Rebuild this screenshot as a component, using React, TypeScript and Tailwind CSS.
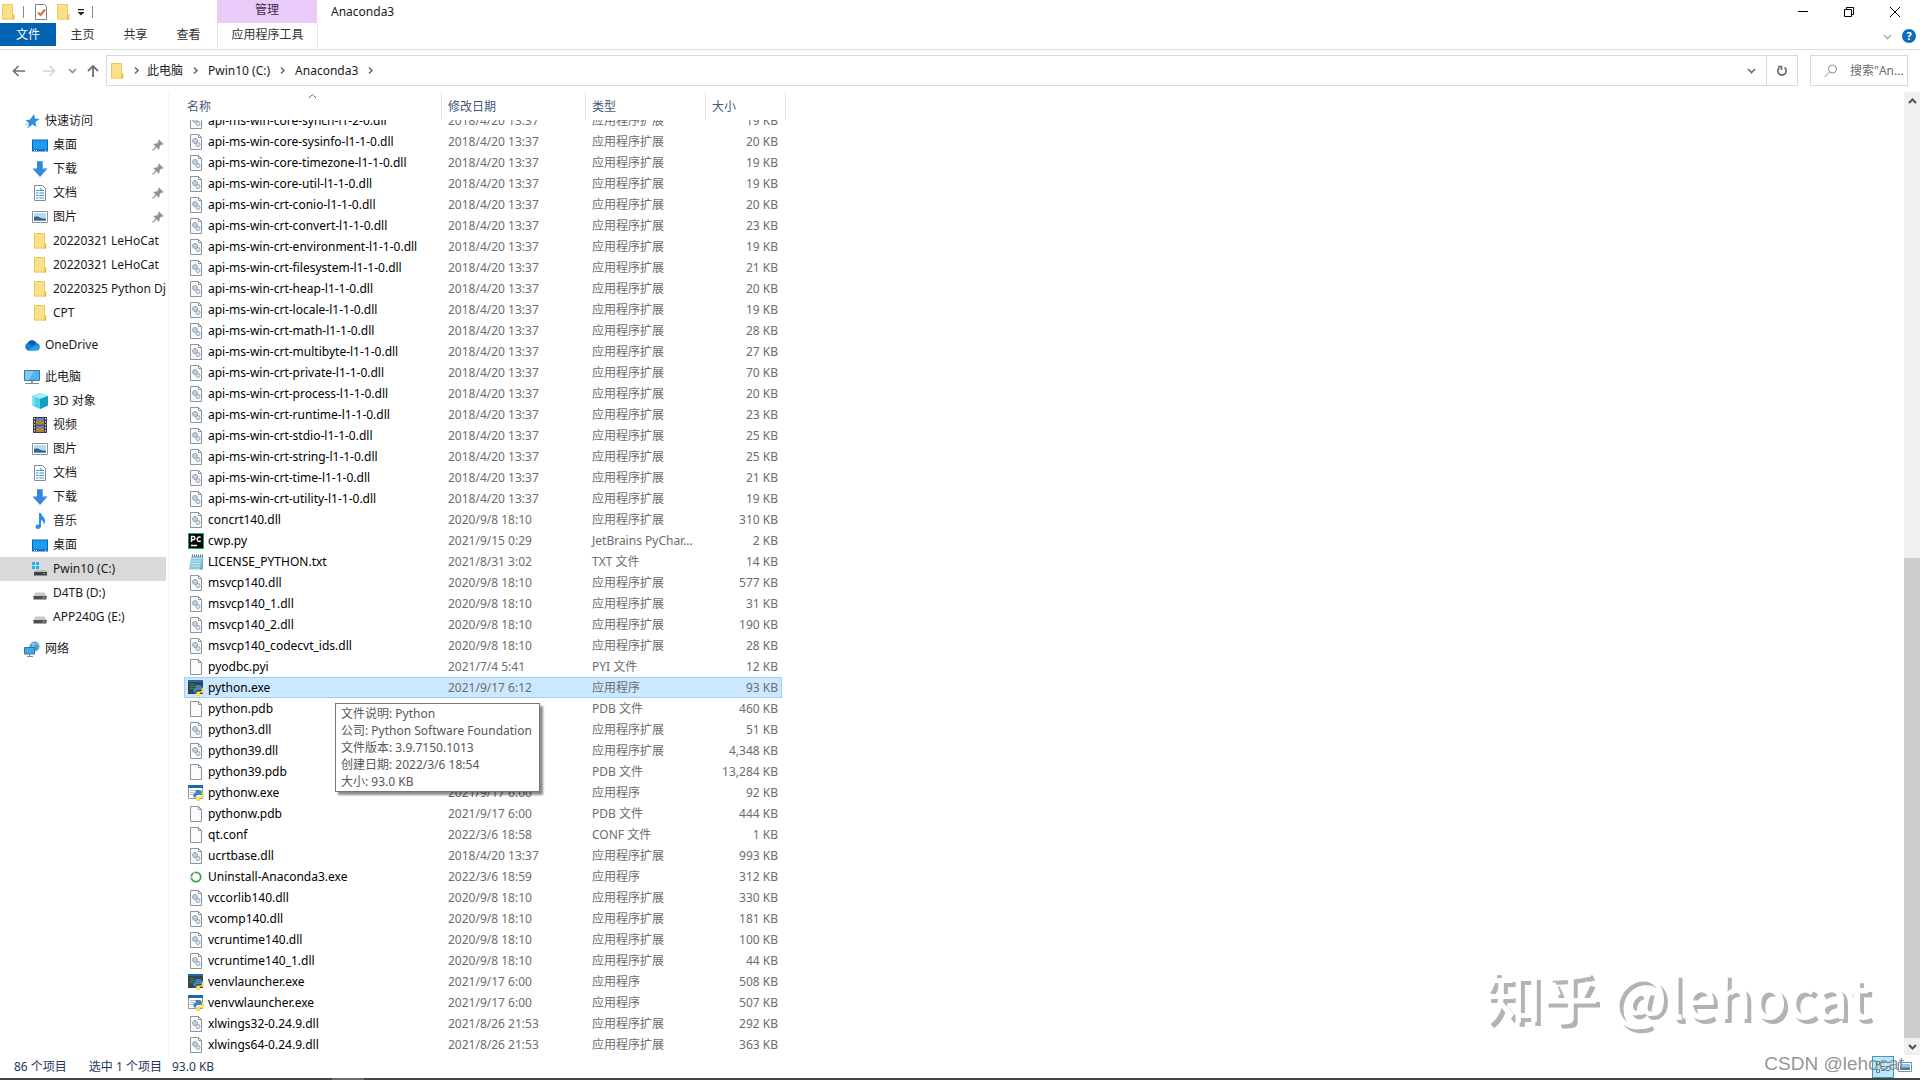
import React from "react";

type FileIcon = "dll" | "blank" | "txt" | "pycharm" | "exe" | "exew" | "conda";

interface FileRow {
  name: string;
  date: string;
  type: string;
  size: string;
  icon: FileIcon;
}

const DLL = "应用程序扩展";
const APP = "应用程序";

const dll = (name: string, date: string, size: string): FileRow => ({ name, date, type: DLL, size, icon: "dll" });

const files: FileRow[] = [
  dll("api-ms-win-core-synch-l1-2-0.dll", "2018/4/20 13:37", "19 KB"),
  dll("api-ms-win-core-sysinfo-l1-1-0.dll", "2018/4/20 13:37", "20 KB"),
  dll("api-ms-win-core-timezone-l1-1-0.dll", "2018/4/20 13:37", "19 KB"),
  dll("api-ms-win-core-util-l1-1-0.dll", "2018/4/20 13:37", "19 KB"),
  dll("api-ms-win-crt-conio-l1-1-0.dll", "2018/4/20 13:37", "20 KB"),
  dll("api-ms-win-crt-convert-l1-1-0.dll", "2018/4/20 13:37", "23 KB"),
  dll("api-ms-win-crt-environment-l1-1-0.dll", "2018/4/20 13:37", "19 KB"),
  dll("api-ms-win-crt-filesystem-l1-1-0.dll", "2018/4/20 13:37", "21 KB"),
  dll("api-ms-win-crt-heap-l1-1-0.dll", "2018/4/20 13:37", "20 KB"),
  dll("api-ms-win-crt-locale-l1-1-0.dll", "2018/4/20 13:37", "19 KB"),
  dll("api-ms-win-crt-math-l1-1-0.dll", "2018/4/20 13:37", "28 KB"),
  dll("api-ms-win-crt-multibyte-l1-1-0.dll", "2018/4/20 13:37", "27 KB"),
  dll("api-ms-win-crt-private-l1-1-0.dll", "2018/4/20 13:37", "70 KB"),
  dll("api-ms-win-crt-process-l1-1-0.dll", "2018/4/20 13:37", "20 KB"),
  dll("api-ms-win-crt-runtime-l1-1-0.dll", "2018/4/20 13:37", "23 KB"),
  dll("api-ms-win-crt-stdio-l1-1-0.dll", "2018/4/20 13:37", "25 KB"),
  dll("api-ms-win-crt-string-l1-1-0.dll", "2018/4/20 13:37", "25 KB"),
  dll("api-ms-win-crt-time-l1-1-0.dll", "2018/4/20 13:37", "21 KB"),
  dll("api-ms-win-crt-utility-l1-1-0.dll", "2018/4/20 13:37", "19 KB"),
  dll("concrt140.dll", "2020/9/8 18:10", "310 KB"),
  { name: "cwp.py", date: "2021/9/15 0:29", type: "JetBrains PyChar...", size: "2 KB", icon: "pycharm" },
  { name: "LICENSE_PYTHON.txt", date: "2021/8/31 3:02", type: "TXT 文件", size: "14 KB", icon: "txt" },
  dll("msvcp140.dll", "2020/9/8 18:10", "577 KB"),
  dll("msvcp140_1.dll", "2020/9/8 18:10", "31 KB"),
  dll("msvcp140_2.dll", "2020/9/8 18:10", "190 KB"),
  dll("msvcp140_codecvt_ids.dll", "2020/9/8 18:10", "28 KB"),
  { name: "pyodbc.pyi", date: "2021/7/4 5:41", type: "PYI 文件", size: "12 KB", icon: "blank" },
  { name: "python.exe", date: "2021/9/17 6:12", type: APP, size: "93 KB", icon: "exe" },
  { name: "python.pdb", date: "2021/9/17 6:12", type: "PDB 文件", size: "460 KB", icon: "blank" },
  dll("python3.dll", "2021/9/17 6:12", "51 KB"),
  dll("python39.dll", "2021/9/17 6:12", "4,348 KB"),
  { name: "python39.pdb", date: "2021/9/17 6:12", type: "PDB 文件", size: "13,284 KB", icon: "blank" },
  { name: "pythonw.exe", date: "2021/9/17 6:00", type: APP, size: "92 KB", icon: "exew" },
  { name: "pythonw.pdb", date: "2021/9/17 6:00", type: "PDB 文件", size: "444 KB", icon: "blank" },
  { name: "qt.conf", date: "2022/3/6 18:58", type: "CONF 文件", size: "1 KB", icon: "blank" },
  dll("ucrtbase.dll", "2018/4/20 13:37", "993 KB"),
  { name: "Uninstall-Anaconda3.exe", date: "2022/3/6 18:59", type: APP, size: "312 KB", icon: "conda" },
  dll("vccorlib140.dll", "2020/9/8 18:10", "330 KB"),
  dll("vcomp140.dll", "2020/9/8 18:10", "181 KB"),
  dll("vcruntime140.dll", "2020/9/8 18:10", "100 KB"),
  dll("vcruntime140_1.dll", "2020/9/8 18:10", "44 KB"),
  { name: "venvlauncher.exe", date: "2021/9/17 6:00", type: APP, size: "508 KB", icon: "exe" },
  { name: "venvwlauncher.exe", date: "2021/9/17 6:00", type: APP, size: "507 KB", icon: "exew" },
  dll("xlwings32-0.24.9.dll", "2021/8/26 21:53", "292 KB"),
  dll("xlwings64-0.24.9.dll", "2021/8/26 21:53", "363 KB"),
];

const SELECTED = "python.exe";

/* ---------- icons ---------- */

const Svg = ({ children, size = 16 }: { children: React.ReactNode; size?: number }) => (
  <svg width={size} height={size} viewBox="0 0 16 16" fill="none" className="shrink-0" aria-hidden="true">
    {children}
  </svg>
);

const FolderIcon = () => (
  <Svg>
    <path d="M2 0h11v10h1.500v5.500H2z" fill="#fbe08a" />
    <path d="M2.500.5h10v10.500h1v4h-11z" stroke="#edc95c" />
    <path d="M12.500 11h1.500v4.500h-1.500z" fill="#e0b540" />
  </Svg>
);

const Page = () => <path d="M2.500.5h8l3 3v12h-11z" fill="#fbfbfb" stroke="#8e949b" />;

const fileIcons: Record<FileIcon, React.ReactNode> = {
  dll: (
    <Svg>
      <Page />
      <path d="M10.500.5v3h3" stroke="#8e949b" />
      <circle cx="7" cy="7" r="2.400" fill="#dfe6ee" stroke="#8496a8" />
      <circle cx="7" cy="7" r=".7" fill="#8496a8" />
      <circle cx="10" cy="10.500" r="2" fill="#dfe9f3" stroke="#8ba6c1" />
    </Svg>
  ),
  blank: (
    <Svg>
      <Page />
      <path d="M10.500.5v3h3" stroke="#8e949b" />
    </Svg>
  ),
  txt: (
    <Svg>
      <path d="M3.500 2h11.500l-.5 13.500H1z" fill="#8ccbd9" />
      <path d="M15 2l-.3 13.500H12l1-3z" fill="#6fa3b1" />
      <path d="M4 4.500h9M3.700 7h9M3.400 9.500h9M3 12h9" stroke="#b9e3ec" />
      <path d="M4 1.500h11" stroke="#5c6b72" strokeWidth="2" strokeDasharray="1 1" />
    </Svg>
  ),
  pycharm: (
    <Svg>
      <path d="M0 0h16v16H0z" fill="#21a366" />
      <path d="M1 1h14v14H1z" fill="#050505" />
      <path d="M3.500 9V3.500h1.800a1.500 1.500 0 010 3.200H3.500M12.700 4.500a2.200 2.200 0 10 0 3.400M3 12.500h6" stroke="#fff" strokeWidth="1.400" />
    </Svg>
  ),
  exe: (
    <Svg>
      <path d="M0 0h15v14H0z" fill="#33454f" />
      <path d="M0 0h15v2H0z" fill="#2367a4" />
      <path d="M2 4.500h4M2 6.500h5M2 8.500h3" stroke="#3f8a4e" />
      <PyLogo />
    </Svg>
  ),
  exew: (
    <Svg>
      <path d="M.5.5h14v13H.5z" fill="#fff" stroke="#8b9aa6" />
      <path d="M0 0h15v3H0z" fill="#1a67ab" />
      <path d="M2 5.500h5M2 7.500h4M2 9.500h3" stroke="#b7c2ca" />
      <PyLogo />
    </Svg>
  ),
  conda: (
    <Svg>
      <circle cx="8" cy="8" r="4.700" stroke="#43a047" strokeWidth="1.800" />
      <path d="M5 4.500l2-1M4 7l-.5 2" stroke="#d5edd6" />
    </Svg>
  ),
};

function PyLogo() {
  return (
    <>
      <path d="M7.500 5h4c1.500 0 2.300.7 2.300 2v3H10c-1.500 0-2 1-2 2.500H6.500C5.500 12.500 5 11 5.300 9.500S7 7.700 7.500 7.700z" fill="#3f83bd" />
      <path d="M13.800 7.500c1.700 0 2.200 1.500 2.200 3s-.8 2.300-2 2.300h-2V16H9.500C8.500 16 8 15.200 8 14s.8-2.500 2-2.500h2.500c1 0 1.300-1 1.300-3z" fill="#f9dc4a" />
    </>
  );
}

const navIcons: Record<string, React.ReactNode> = {
  star: (
    <Svg>
      <path d="M10 1l1 4.500 4.500.5-4 3 1 5-4-2.500L4 15l1-5L1.500 7.500l4.500-1z" fill="#2d8fdd" />
      <path d="M1 12l4-2M3 15l2-3" stroke="#8cc3ee" />
    </Svg>
  ),
  desktop: (
    <Svg>
      <path d="M0 2.500h16v12H0z" fill="#0a67b5" />
      <path d="M1 3.500h14v9H1z" fill="#1e9bf5" />
      <path d="M2 13.500h1M4 13.500h1M13 13.500h1" stroke="#d9ecfb" />
    </Svg>
  ),
  download: (
    <Svg>
      <path d="M5 0h6v7.500h4.500L8 16 .5 7.500H5z" fill="#3289dc" />
      <path d="M5.500.5h5v7.500H14" stroke="#64aaeb" />
    </Svg>
  ),
  doc: (
    <Svg>
      <path d="M2.500.5h8l3 3v12h-11z" fill="#fff" stroke="#7f8b95" />
      <path d="M4 5.500h3.500M4 8h2.500M7.500 8H12M4 10.500h2.500M7.500 10.500H12M4 13h2.500M7.500 13H12M9 3v3M8 5.500h4" stroke="#3a96c9" strokeWidth="1.200" />
    </Svg>
  ),
  picture: (
    <Svg>
      <path d="M.5 2.500h15v11H.5z" fill="#fff" stroke="#8a949c" />
      <path d="M2 4h12v8H2z" fill="#b7dcf4" />
      <path d="M2 8c3-2 5 0 7 1s3 0 5 1v2H2z" fill="#34658c" />
      <path d="M2 11h12v1H2z" fill="#5f9cc7" />
    </Svg>
  ),
  cloud: (
    <Svg>
      <path d="M4 13.500a4 4 0 01-.5-7.500A5 5 0 0112.500 6 3.800 3.800 0 0112.500 13.500z" fill="#1480d8" />
      <path d="M3.500 6A5 5 0 0112.500 6L8 9z" fill="#0c5cab" />
      <path d="M4 13.500L12 8.500c4 0 5 4.500 1 5z" fill="#2ba4ee" />
    </Svg>
  ),
  pc: (
    <Svg>
      <path d="M.5 1.500h15v10H.5z" fill="#4db2ee" stroke="#477492" />
      <path d="M1 2h9L5 11H1z" fill="#7ecbf5" />
      <path d="M7 12h2v2H7z" fill="#8c9aa4" />
      <path d="M1 14.500h14" stroke="#7d8b95" />
    </Svg>
  ),
  cube: (
    <Svg>
      <path d="M8 0l8 3v9.500L8 16 0 12.500V3z" fill="#4fd0e3" />
      <path d="M8 0l8 3-8 3-8-3z" fill="#a5ebf4" />
      <path d="M8 6l8-3v9.500L8 16z" fill="#13a0bf" />
      <path d="M0 3l2.500 1v9.500L0 12.500z" fill="#8fe3ee" />
    </Svg>
  ),
  video: (
    <Svg>
      <path d="M1 0h14v16H1z" fill="#3b3d42" />
      <path d="M4 1h8v6.500H4zM4 8.500h8V15H4z" fill="#5a82b8" />
      <path d="M4 4c3-2 5 0 8 1v2.500H4zM4 12c2-3 5-1 8 1v2H4z" fill="#b38335" />
      <path d="M2.500 1v14M13.500 1v14" stroke="#d8d8d8" strokeDasharray="1.500 1.500" />
    </Svg>
  ),
  music: (
    <Svg>
      <path d="M7 0h2c.5 3 4.500 4.500 4 8.500-.2 1.500-1 2.500-1.500 3 .3-3-1-4-2.500-4.500V13c0 1.800-1.500 3-3.300 3S3 14.500 3.700 13 5.500 11.200 7 11.500z" fill="#2d8fe0" />
    </Svg>
  ),
  osdrive: (
    <Svg>
      <path d="M0 1h3v3H0zM4 1h3v3H4zM0 5h3v3H0zM4 5h3v3H4z" fill="#26aef0" />
      <path d="M4 9h10l1 2H2.500z" fill="#b9bdc0" />
      <path d="M2 11h13v3.500H2z" fill="#3e4347" />
      <path d="M11.500 12.500h1.500" stroke="#5ee08a" />
    </Svg>
  ),
  drive: (
    <Svg>
      <path d="M3.500 7.500h9L14.500 11h-13z" fill="#c6c9cb" />
      <path d="M1.500 11h13v3.500h-13z" fill="#4b5054" />
      <path d="M11 12.700h1.500" stroke="#b9e7c8" />
    </Svg>
  ),
  network: (
    <Svg>
      <circle cx="10.500" cy="5.500" r="5" fill="#4f9fd0" />
      <path d="M7 2.500c3 1 5 0 7 1M10 .5c-2 3-1 6 1 9" stroke="#a6d3ee" />
      <path d="M.5 6.500h10v6.500H.5z" fill="#43a9e8" stroke="#3d6f93" />
      <path d="M3 15.500h6M5.500 13v2" stroke="#6f8797" />
    </Svg>
  ),
  folder: <FolderIcon />,
};

const PinIcon = () => (
  <svg width="12" height="12" viewBox="0 0 12 12" className="shrink-0" aria-hidden="true">
    <path d="M7 .5L11.500 5l-1 .8-1-.3-2 2 .2 2-1 1L1.500 5.500l1-1 2 .2 2-2L6.200 1.500z" fill="#8b949c" />
    <path d="M4 8L.5 11.500" stroke="#8b949c" strokeWidth="1.200" />
  </svg>
);

// small angle used by the path bar, scroll bar and menus
const Chevron = ({ dir, color = "#6b6b6b", width = 1.6 }: { dir: "up" | "down" | "right"; color?: string; width?: number }) => {
  const paths = { up: "M1 6l3.500-3.500L8 6", down: "M1 3l3.500 3.500L8 3", right: "M3 1.500l3 3-3 3" };
  return (
    <svg width="9" height="9" viewBox="0 0 9 9" fill="none" className="shrink-0" aria-hidden="true">
      <path d={paths[dir]} stroke={color} strokeWidth={width} />
    </svg>
  );
};

/* ---------- title bar and ribbon ---------- */

const TitleBar = () => (
  <header className="flex h-[23px] items-stretch">
    <div className="flex w-[217px] items-center">
      <FolderIcon />
      <span className="ml-[7px] h-3 w-px bg-[#8a8a8a]" />
      <button className="ml-[9px]" aria-label="属性">
        <Svg>
          <path d="M2.500.5h9l2 2v13h-11z" fill="#fff" stroke="#7d7d86" />
          <path d="M5 8.500l2.500 2.500L12 5.500" stroke="#dd6a36" strokeWidth="2" />
        </Svg>
      </button>
      <button className="ml-[6px]" aria-label="新建文件夹">
        <FolderIcon />
      </button>
      <button className="ml-[6px]" aria-label="自定义快速访问工具栏">
        <svg width="8" height="8" viewBox="0 0 8 8" aria-hidden="true">
          <path d="M1 1h6v1.200H1zM.5 4h7L4 7.500z" fill="#222" />
        </svg>
      </button>
      <span className="ml-[7px] h-3 w-px bg-[#8a8a8a]" />
    </div>
    <div className="flex w-[100px] items-center justify-center bg-[#e8cbf9] pb-1 text-[#3f2d4b]">管理</div>
    <h1 className="flex flex-1 items-center pl-[14px]">Anaconda3</h1>
    <div className="flex pr-[2px]">
      <button className="flex w-[46px] items-center justify-center" aria-label="最小化">
        <svg width="10" height="10" viewBox="0 0 10 10" aria-hidden="true">
          <path d="M0 4h10v1H0z" />
        </svg>
      </button>
      <button className="flex w-[46px] items-center justify-center" aria-label="还原">
        <svg width="10" height="10" viewBox="0 0 10 10" fill="none" stroke="#000" aria-hidden="true">
          <path d="M.5 2.500h7v7h-7zM2.500 2.500v-2h7v7h-2" />
        </svg>
      </button>
      <button className="flex w-[46px] items-center justify-center" aria-label="关闭">
        <svg width="10" height="10" viewBox="0 0 10 10" fill="none" stroke="#000" aria-hidden="true">
          <path d="M0 0l10 10M10 0L0 10" />
        </svg>
      </button>
    </div>
  </header>
);

const Ribbon = () => (
  <div className="flex h-[27px] items-start border-b border-[#dadbdc] text-[#333]">
    <button className="h-[23px] w-14 bg-[#0063b1] text-white">文件</button>
    {["主页", "共享", "查看"].map((tab) => (
      <button key={tab} className="h-6 w-[53px]">
        {tab}
      </button>
    ))}
    <button className="ml-[2px] h-6 w-[101px] border-x border-[#e3e0e6]">应用程序工具</button>
    <div className="ml-auto flex h-[26px] items-center gap-[10px] pr-1">
      <button aria-label="展开功能区">
        <Chevron dir="down" color="#b0b0b0" />
      </button>
      <button className="flex size-[14px] items-center justify-center rounded-full bg-[#0f6cbd] text-[11px] font-bold text-white">
        ?
      </button>
    </div>
  </div>
);

const AddressBar = () => (
  <div className="flex h-[42px] items-start pt-[5px] pr-3 pl-[11px]">
    <div className="flex h-[31px] items-center">
      <button className="flex w-4 justify-center" aria-label="后退">
        <svg width="14" height="12" viewBox="0 0 14 12" fill="none" stroke="#6e6e6e" strokeWidth="1.600" aria-hidden="true">
          <path d="M13 6H2M6.500 1L1.500 6l5 5" />
        </svg>
      </button>
      <button className="ml-[14px] flex w-4 justify-center" aria-label="前进">
        <svg width="14" height="12" viewBox="0 0 14 12" fill="none" stroke="#d3d3d3" strokeWidth="1.600" aria-hidden="true">
          <path d="M1 6h11M7.500 1l5 5-5 5" />
        </svg>
      </button>
      <button className="ml-[11px]" aria-label="最近浏览的位置">
        <Chevron dir="down" color="#8b8b8b" />
      </button>
      <button className="ml-[10px]" aria-label="上移">
        <svg width="12" height="14" viewBox="0 0 12 14" fill="none" stroke="#6e6e6e" strokeWidth="1.800" aria-hidden="true">
          <path d="M6 13V2M1 7l5-5 5 5" />
        </svg>
      </button>
    </div>
    <div className="ml-[7px] flex h-[31px] flex-1 border border-[#d9d9d9]">
      <nav className="flex flex-1 items-center pl-[2px]">
        <FolderIcon />
        <span className="flex w-[22px] justify-center">
          <Chevron dir="right" />
        </span>
        {["此电脑", "Pwin10 (C:)", "Anaconda3"].map((part) => (
          <React.Fragment key={part}>
            <a href="#">{part}</a>
            <span className="flex w-[25px] justify-center">
              <Chevron dir="right" />
            </span>
          </React.Fragment>
        ))}
      </nav>
      <button className="flex w-[29px] items-center justify-center" aria-label="以前的位置">
        <Chevron dir="down" />
      </button>
      <button className="flex w-[31px] items-center justify-center border-l border-[#d9d9d9]" aria-label="刷新">
        <svg width="12" height="12" viewBox="0 0 12 12" fill="none" stroke="#6b6b6b" strokeWidth="1.700" aria-hidden="true">
          <path d="M8.500 2.500a4.200 4.200 0 11-5 0" />
          <path d="M2 1.500h3.500V5" />
        </svg>
      </button>
    </div>
    <label className="ml-3 flex h-[31px] w-[98px] items-center border border-[#d9d9d9] pl-[13px]">
      <svg width="14" height="14" viewBox="0 0 14 14" fill="none" stroke="#8a8a8a" className="shrink-0" aria-hidden="true">
        <circle cx="8.500" cy="5" r="4" />
        <path d="M5.500 8L.5 13" />
      </svg>
      <input
        className="ml-3 w-full min-w-0 bg-transparent outline-none placeholder:text-[#6d6d6d] placeholder:opacity-100"
        placeholder={'搜索"An...'}
        aria-label="搜索"
      />
    </label>
  </div>
);

/* ---------- navigation pane ---------- */

interface NavItem {
  label: string;
  icon: string;
  pinned?: boolean;
  selected?: boolean;
}

const navGroups: { head: NavItem; items: NavItem[] }[] = [
  {
    head: { label: "快速访问", icon: "star" },
    items: [
      { label: "桌面", icon: "desktop", pinned: true },
      { label: "下载", icon: "download", pinned: true },
      { label: "文档", icon: "doc", pinned: true },
      { label: "图片", icon: "picture", pinned: true },
      { label: "20220321 LeHoCat", icon: "folder" },
      { label: "20220321 LeHoCat", icon: "folder" },
      { label: "20220325 Python Dj", icon: "folder" },
      { label: "CPT", icon: "folder" },
    ],
  },
  { head: { label: "OneDrive", icon: "cloud" }, items: [] },
  {
    head: { label: "此电脑", icon: "pc" },
    items: [
      { label: "3D 对象", icon: "cube" },
      { label: "视频", icon: "video" },
      { label: "图片", icon: "picture" },
      { label: "文档", icon: "doc" },
      { label: "下载", icon: "download" },
      { label: "音乐", icon: "music" },
      { label: "桌面", icon: "desktop" },
      { label: "Pwin10 (C:)", icon: "osdrive", selected: true },
      { label: "D4TB (D:)", icon: "drive" },
      { label: "APP240G (E:)", icon: "drive" },
    ],
  },
  { head: { label: "网络", icon: "network" }, items: [] },
];

const NavPane = () => (
  <nav className="w-[169px] shrink-0 border-r border-[#f3f3f3] pt-[17px] pr-[2px]">
    {navGroups.map((group) => (
      <div key={group.head.label} className="mb-2">
        <a href="#" className="flex h-6 items-center gap-[5px] pl-6">
          {navIcons[group.head.icon]}
          {group.head.label}
        </a>
        {group.items.map((item, index) => (
          <a
            key={index}
            href="#"
            className={`flex h-6 items-center gap-[5px] pl-8 ${item.selected ? "bg-[#d9d9d9]" : ""}`}
          >
            {navIcons[item.icon]}
            <span className="flex-1 overflow-hidden whitespace-nowrap">{item.label}</span>
            {item.pinned && (
              <span className="pr-[2px]">
                <PinIcon />
              </span>
            )}
          </a>
        ))}
      </div>
    ))}
  </nav>
);

/* ---------- file list ---------- */

const Tooltip = () => (
  <div
    role="tooltip"
    className="absolute top-[25px] left-[150px] z-10 border border-[#767676] bg-white py-px pr-[7px] pl-[5px] leading-[17px] whitespace-nowrap text-[#575757] shadow-[3px_3px_2px_rgba(0,0,0,0.45)]"
  >
    <p>文件说明: Python</p>
    <p>公司: Python Software Foundation</p>
    <p>文件版本: 3.9.7150.1013</p>
    <p>创建日期: 2022/3/6 18:54</p>
    <p>大小: 93.0 KB</p>
  </div>
);

const FileList = () => (
  <main className="flex-1 pl-[15px]">
    <table className="w-[602px] table-fixed border-separate border-spacing-0">
      <thead>
        <tr className="h-7 text-left text-[#44597a]">
          <th className="relative w-[258px] border-r border-[#e5e5e5] pt-[2px] pl-[3px] font-normal">
            <span className="absolute inset-x-0 top-0 flex justify-center">
              <Chevron dir="up" color="#6b6b6b" width={1} />
            </span>
            名称
          </th>
          <th className="w-36 border-r border-[#e5e5e5] pt-[2px] pl-[6px] font-normal">修改日期</th>
          <th className="w-[120px] border-r border-[#e5e5e5] pt-[2px] pl-[6px] font-normal">类型</th>
          <th className="border-r border-[#e5e5e5] pt-[2px] pl-[6px] font-normal">大小</th>
        </tr>
      </thead>
      <tbody>
        {files.map((file, index) => {
          const selected = file.name === SELECTED;
          const cell = selected ? "border-y border-[#99d1ff] bg-[#cce8ff]" : "";
          // the first visible row is scrolled half way under the header
          const line = index === 0 ? "flex h-[11px] items-end overflow-hidden" : selected ? "flex h-[19px] items-center" : "flex h-[21px] items-center";
          return (
            <tr key={file.name} className="text-[#6d6d6d]">
              <td className={`relative p-0 whitespace-nowrap text-black ${cell} ${selected ? "border-l" : ""}`}>
                <div className={line}>
                  <span className={`flex h-[21px] shrink-0 items-center gap-1 ${selected ? "pl-[3px]" : "pl-1"}`}>
                    {fileIcons[file.icon]}
                    {file.name}
                  </span>
                </div>
                {selected && <Tooltip />}
              </td>
              <td className={`p-0 pl-[6px] ${cell}`}>
                <div className={line}>
                  <span className="h-[21px] shrink-0 leading-[21px]">{file.date}</span>
                </div>
              </td>
              <td className={`p-0 pl-[6px] ${cell}`}>
                <div className={line}>
                  <span className="h-[21px] shrink-0 leading-[21px] whitespace-nowrap">{file.type}</span>
                </div>
              </td>
              <td className="p-0 pr-1">
                <div className={`${cell} ${selected ? "border-r" : ""}`}>
                  <div className={`${line} justify-end ${selected ? "pr-[3px]" : "pr-1"}`}>
                    <span className="h-[21px] shrink-0 leading-[21px]">{file.size}</span>
                  </div>
                </div>
              </td>
            </tr>
          );
        })}
      </tbody>
    </table>
  </main>
);

const ScrollBar = () => (
  <div className="flex w-4 shrink-0 flex-col bg-[#f0f0f0]">
    <button className="flex h-[18px] items-center justify-center" aria-label="向上滚动">
      <Chevron dir="up" color="#505050" width={2} />
    </button>
    <div className="flex-[449]" />
    <div className="flex-[481] bg-[#cdcdcd]" />
    <button className="flex h-[17px] items-center justify-center" aria-label="向下滚动">
      <Chevron dir="down" color="#505050" width={2} />
    </button>
  </div>
);

const StatusBar = () => (
  <footer className="flex h-[23px] items-center text-[#1e395b]">
    <span className="pt-px pl-[14px]">86 个项目</span>
    <span className="pt-px pl-[22px]">选中 1 个项目</span>
    <span className="pt-px pl-[10px]">93.0 KB</span>
    <div className="ml-auto flex items-center gap-1 pr-2">
      <button className="flex h-[22px] w-[22px] items-center justify-center border border-[#3a9bc4] bg-[#bfe6f7]" aria-label="详细信息">
        <svg width="14" height="12" viewBox="0 0 14 12" fill="none" stroke="#5a7d92" aria-hidden="true">
          <path d="M.5.500h3v3h-3zM.5 8.500h3v3h-3zM5 1.500h4M10 1.500h4M5 5.500h4M10 5.500h4M5 9.500h4M10 9.500h4" />
        </svg>
      </button>
      <button aria-label="大图标">
        <svg width="14" height="12" viewBox="0 0 14 12" fill="none" aria-hidden="true">
          <path d="M.5 1.500h13v9H.5z" fill="#fff" stroke="#7d8f9b" />
          <path d="M2 3h10v6H2z" fill="#8fc7ea" />
          <path d="M2 6.500h10v2.500H2z" fill="#3f7fa8" />
        </svg>
      </button>
    </div>
  </footer>
);

const App: React.FC = () => {
  return (
    <div className="relative flex min-h-screen flex-col overflow-hidden bg-white font-['Noto_Sans','Noto_Sans_CJK_SC',sans-serif] text-[12px] leading-4 text-[#1a1a1a]">
      <TitleBar />
      <Ribbon />
      <AddressBar />

      <div className="flex flex-1">
        <NavPane />
        <FileList />
        <ScrollBar />
      </div>

      <StatusBar />
      <div className="h-[2px] bg-[#444]">
        <div className="ml-[332px] h-full w-8 bg-[#6a6a6a]" />
      </div>

      {/* watermarks */}
      <p className="pointer-events-none absolute right-[50px] bottom-[54px] font-['Noto_Sans_CJK_SC',sans-serif] text-[57px] leading-[64px] font-medium whitespace-nowrap text-white [text-shadow:4px_4px_0_#b3b3b3]">
        知乎 @lehocat
      </p>
      <p className="pointer-events-none absolute right-4 bottom-1 font-['Liberation_Sans',sans-serif] text-[19px] leading-6 whitespace-nowrap text-[#777]/80">
        CSDN @lehocat
      </p>
    </div>
  );
};

export default App;
